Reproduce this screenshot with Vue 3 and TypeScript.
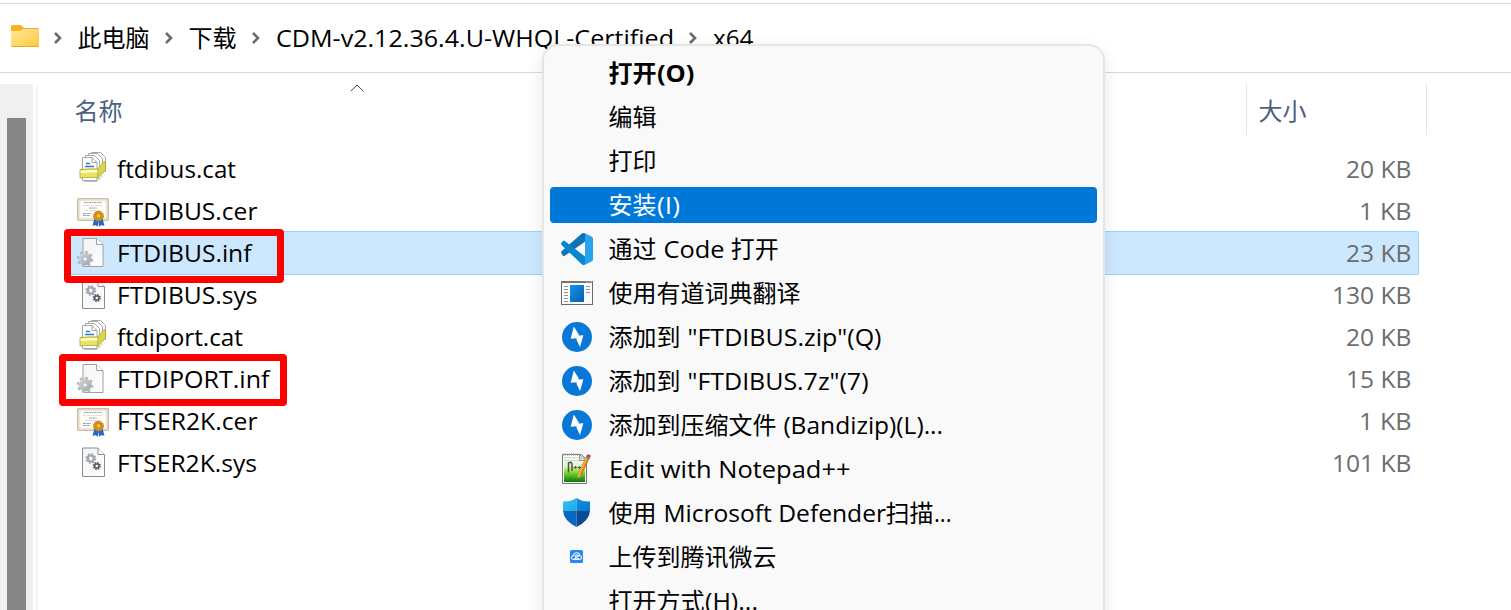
<script setup lang="ts">
import type { Directive } from 'vue'

type Run = { t: string; w?: number }
type FileRow = { name: Run; kind: 'cat' | 'cer' | 'inf' | 'sys'; size: Run; selected?: boolean }
type MenuItem = { runs: Run[]; icon?: string; bold?: boolean; active?: boolean }

// Condenses a Latin run so that it takes up exactly the given advance width.
const vFit: Directive<HTMLElement, number | undefined> = {
  mounted(el, { value }) {
    if (!value) return
    const inner = el.firstElementChild as HTMLElement
    const natural = inner.getBoundingClientRect().width
    el.style.width = `${value}px`
    inner.style.transform = `scaleX(${value / natural})`
  },
}

const crumbs: Run[] = [
  { t: '此电脑' },
  { t: '下载' },
  { t: 'CDM-v2.12.36.4.U-WHQL-Certified', w: 398 },
  { t: 'x64', w: 40.5 },
]

const files: FileRow[] = [
  { name: { t: 'ftdibus.cat', w: 119 }, kind: 'cat', size: { t: '20 KB', w: 65.5 } },
  { name: { t: 'FTDIBUS.cer', w: 140.5 }, kind: 'cer', size: { t: '1 KB', w: 52.5 } },
  { name: { t: 'FTDIBUS.inf', w: 134.5 }, kind: 'inf', size: { t: '23 KB', w: 65.5 }, selected: true },
  { name: { t: 'FTDIBUS.sys', w: 140.5 }, kind: 'sys', size: { t: '130 KB', w: 79.5 } },
  { name: { t: 'ftdiport.cat', w: 126 }, kind: 'cat', size: { t: '20 KB', w: 65.5 } },
  { name: { t: 'FTDIPORT.inf', w: 152.5 }, kind: 'inf', size: { t: '15 KB', w: 65.5 } },
  { name: { t: 'FTSER2K.cer', w: 140.5 }, kind: 'cer', size: { t: '1 KB', w: 52.5 } },
  { name: { t: 'FTSER2K.sys', w: 140 }, kind: 'sys', size: { t: '101 KB', w: 79.5 } },
]

const menu: MenuItem[] = [
  { runs: [{ t: '打开' }, { t: '(O)', w: 37.5 }], bold: true },
  { runs: [{ t: '编辑' }] },
  { runs: [{ t: '打印' }] },
  { runs: [{ t: '安装' }, { t: '(I)', w: 23 }], active: true },
  { runs: [{ t: '通过' }, { t: ' Code ', w: 74.2 }, { t: '打开' }], icon: 'code' },
  { runs: [{ t: '使用有道词典翻译' }], icon: 'dict' },
  { runs: [{ t: '添加到' }, { t: ' "FTDIBUS.zip"(Q)', w: 200.5 }], icon: 'zip' },
  { runs: [{ t: '添加到' }, { t: ' "FTDIBUS.7z"(7)', w: 187.5 }], icon: 'zip' },
  { runs: [{ t: '添加到压缩文件' }, { t: ' (Bandizip)(L)...', w: 166 }], icon: 'zip' },
  { runs: [{ t: 'Edit with Notepad++', w: 241.5 }], icon: 'npp' },
  { runs: [{ t: '使用' }, { t: ' Microsoft Defender', w: 229 }, { t: '扫描' }, { t: '...', w: 17.5 }], icon: 'shield' },
  { runs: [{ t: '上传到腾讯微云' }], icon: 'cloud' },
  { runs: [{ t: '打开方式' }, { t: '(H)...', w: 53 }] },
]
</script>

<template>
  <div class="window">
    <svg class="defs" width="0" height="0" aria-hidden="true">
      <defs>
        <linearGradient id="folder" x1="0" y1="0" x2="1" y2="1">
          <stop offset="0" stop-color="#ffe9a0" /><stop offset="1" stop-color="#fdc93c" />
        </linearGradient>
        <linearGradient id="page" x1="0" y1="0" x2="1" y2="1">
          <stop offset="0" stop-color="#f4f4f4" /><stop offset="1" stop-color="#fdfdfd" />
        </linearGradient>
        <linearGradient id="gear" x1="0" y1="0" x2="1" y2="1">
          <stop offset="0" stop-color="#ced4d9" /><stop offset="1" stop-color="#a4abb1" />
        </linearGradient>
        <linearGradient id="blue" x1="0" y1="0" x2="1" y2="1">
          <stop offset="0" stop-color="#1593e6" /><stop offset="1" stop-color="#0560b5" />
        </linearGradient>
        <linearGradient id="grass" x1="0" y1="0" x2="0" y2="1">
          <stop offset="0" stop-color="#f6faf4" /><stop offset=".35" stop-color="#e2f5cf" />
          <stop offset=".62" stop-color="#82d92b" /><stop offset="1" stop-color="#08780c" />
        </linearGradient>
        <linearGradient id="sh-a" x1="0" y1="0" x2="1" y2="1">
          <stop offset="0" stop-color="#34c5f3" /><stop offset="1" stop-color="#22a5e8" />
        </linearGradient>
        <linearGradient id="sh-b" x1="0" y1="0" x2="1" y2="1">
          <stop offset="0" stop-color="#1290df" /><stop offset="1" stop-color="#0878d4" />
        </linearGradient>
      </defs>
      <symbol id="i-cat" viewBox="0 0 32 32">
        <g fill="#fff" stroke="#a5a8a6" stroke-width="1">
          <path d="M14.5 1.5h9l5 5v14h-14z" /><path d="M11.5 2.500h9l5 5v14h-14z" />
          <path d="M8.500 4.500h9l5 5v14h-14z" /><path d="M5.500 6.500h9.500l5 5v18h-14.500z" />
          <path d="M15 6.500v5h5" fill="none" />
        </g>
        <path d="M9 12.500h4M8 15.500h9" stroke="#3273c4" stroke-width="1.400" />
        <path d="M20.500 18l8-8.500v9.500l-8 9z" fill="#dcd54a" stroke="#a9a331" stroke-width=".7" />
        <path d="M3 18.500q9-1 17.800-.5v8.500q-9-.5-17.800.5z" fill="#e9e45c" stroke="#aaa535" stroke-width=".8" />
        <path d="M3.500 21q9-1 17-.7" stroke="#fcfccc" stroke-width="2.500" fill="none" />
        <path d="M7 30.500h13l6-6" stroke="#bdbdbd" fill="none" />
      </symbol>
      <symbol id="i-cer" viewBox="0 0 32 32" overflow="visible">
        <rect x=".8" y="5.800" width="30.400" height="21.400" rx="1" fill="#fffdf8" stroke="#c9bda6" stroke-width="1.600" />
        <rect x="2.500" y="7.500" width="27" height="18" fill="none" stroke="#e6decd" stroke-width="1.600" stroke-dasharray="1.500 .7" />
        <path d="M7 9.500h18" stroke="#9daac4" stroke-dasharray="2 .5" />
        <path d="M6 12.500h20M8 17.500h12" stroke="#d9d9de" stroke-dasharray="3 1" />
        <path d="M12 15h8M6 20.500h8M6 22.500h7" stroke="#91a0c5" stroke-dasharray="3 .6" />
        <path d="M17.500 25l-2 8 3-1 2.300 1.800 1-7zM25.500 25l2 8-3-1-2.300 1.800-1-7z" fill="#2467c7" />
        <circle cx="21.500" cy="23" r="5" fill="#d9951b" stroke="#bd7711" stroke-width="1" stroke-dasharray="1.500 .8" />
        <circle cx="21.500" cy="22.800" r="2.600" fill="#efb943" stroke="#b8730d" stroke-width=".8" />
      </symbol>
      <symbol id="i-inf" viewBox="0 0 32 32">
        <path d="M6 3.500h13.500l6.500 6v22h-20z" fill="url(#page)" stroke="#a0a0a0" />
        <path d="M19.500 3.500v6h6.500" fill="#fff" stroke="#a0a0a0" />
        <circle cx="8" cy="24" r="7" fill="none" stroke="#b2b8bd" stroke-width="2.600" stroke-dasharray="2.700 2.800" />
        <circle cx="8" cy="24" r="4.500" fill="none" stroke="url(#gear)" stroke-width="4" />
        <circle cx="8" cy="24" r="2.300" fill="#f3f5f7" stroke="#8f979e" stroke-width=".7" />
      </symbol>
      <symbol id="i-sys" viewBox="0 0 32 32">
        <path d="M5.500 3h15.500l6.500 6.500v22h-22z" fill="url(#page)" stroke="#8d8d8d" />
        <path d="M21 3v6.500h6.500" fill="#fff" stroke="#8d8d8d" />
        <circle cx="13.800" cy="13.500" r="4.500" fill="none" stroke="#9ba5ae" stroke-width="1.800" stroke-dasharray="1.770 1.765" />
        <circle cx="13.800" cy="13.500" r="3" fill="none" stroke="#9ba5ae" stroke-width="2.200" />
        <circle cx="19.800" cy="21" r="3.400" fill="none" stroke="#545b61" stroke-width="1.600" stroke-dasharray="1.335 1.335" />
        <circle cx="19.800" cy="21" r="2.200" fill="none" stroke="#545b61" stroke-width="1.700" />
      </symbol>
      <symbol id="i-code" viewBox="0 0 32 32">
        <path d="M.5 20.200Q-.4 19.200.5 18.200L20.500.7Q22 -.4 24 0v8.700L3.300 23.100Q2.400 23.500 1.700 22.600z" fill="#0f72b9" />
        <path d="M.5 9.800Q-.4 10.800.5 12L20.500 31Q22 32.300 24 32V23.500L3.500 7.800Q2.600 7.200 1.700 8.200z" fill="#0785cf" />
        <path d="M20.500 31.300c1.500 1.100 2.600.8 3.500.4l6.500-3.100q1.500-.7 1.500-2.300V5.700q0-1.600-1.500-2.300L24 .3C22.800-.2 21.500 0 20.500.9c1.600-1.300 3.500-.5 3.500 1.400v27.600c0 1.900-2 2.800-3.500 1.400z" fill="#27a4ed" />
      </symbol>
      <symbol id="i-dict" viewBox="0 0 32 32">
        <rect x=".5" y="4.500" width="31" height="23" fill="#fafafa" stroke="#696969" />
        <path d="M0 5h32" stroke="#747474" stroke-width="2" />
        <path d="M25 5h1M27.500 5h1M30 5h1" stroke="#eee" />
        <path d="M3 9.500h4M3 12.500h4M3 15.500h4M3 18.500h4M3 21.500h4M3 24.500h4M25 9.500h4M25 12.500h4M25 15.500h4" stroke="#939393" />
        <rect x="9" y="8" width="14" height="17" fill="url(#blue)" />
      </symbol>
      <symbol id="i-zip" viewBox="0 0 32 32">
        <circle cx="16" cy="16" r="15" fill="#0878d8" />
        <path d="M12.800 5.500l4.900 7.800-.3 1.300 5-.3-3.400 11.800-3.600-7.600.5-1.300-6.200.6z" fill="#fff" />
      </symbol>
      <symbol id="i-npp" viewBox="0 0 32 32">
        <path d="M1.500 1.500h19l5 5v24h-24z" fill="#fff" stroke="#777" />
        <path d="M3 4h17l4 4v21H3z" fill="url(#grass)" />
        <path d="M3 4.500h16M3 7.500h19" stroke="#cbd9dc" />
        <path d="M2 1.500h18" stroke="#999" stroke-dasharray="1 1" stroke-width="2" />
        <path d="M18.500 1.500l6.500 6h-6.500z" fill="#d6d6d6" stroke="#999" />
        <path d="M7.500 19.500V10q3.500-2 3.500 2v6" fill="none" stroke="#4a5248" stroke-width="1.500" />
        <path d="M12.500 14.500h4M17 14.500h3M14.500 13v3M18.500 13v3" stroke="#526548" stroke-width="1.200" />
        <path d="M27.500 3L18.500 22" stroke="#c7791b" stroke-width="4" />
        <path d="M26.800 3L18 22" stroke="#efae38" stroke-width="2" />
        <path d="M16.700 21l3.600 1.500-3.800 2.800z" fill="#d3ae73" />
        <path d="M26.500 1l3.500 1.500-1.500 3-3-1.500z" fill="#c64456" />
        <path d="M25 4l3.500 1.700" stroke="#668fa8" stroke-width="1.500" />
      </symbol>
      <symbol id="i-shield" viewBox="0 0 32 32">
        <path d="M15.500 1Q9.500 5 2 4.500V14h13.500z" fill="url(#sh-a)" />
        <path d="M15.500 1Q21.500 5 29 4.500V14H15.500z" fill="url(#sh-b)" />
        <path d="M2 14h13.500v16Q3 24 2 14z" fill="#0867c4" />
        <path d="M29 14H15.500v16Q28 24 29 14z" fill="#084b92" />
      </symbol>
      <symbol id="i-cloud" viewBox="0 0 32 32">
        <rect x="9" y="9" width="13" height="13" rx="1.500" fill="#2b87ee" />
        <path d="M13 18.500q-2.800-.2-2.300-2.300.3-1.500 2-1.600.5-2.800 3-2.800t3 2.800q1.800.2 1.900 2 0 1.900-2.400 1.900zM13 18.500l4.500-3.500q-2-1.700-3 0-.4 2.500 3.500 2.500" fill="none" stroke="#e9f4ff" stroke-width="1.100" />
      </symbol>
    </svg>

    <header class="address">
      <svg class="folder" width="28" height="23" viewBox="0 0 28 23">
        <path d="M0 1.500Q0 0 1.500 0H9q1 0 1.700.8L13 3v4H0z" fill="#f7b21c" />
        <path d="M0 6h9.500L12 3.500h15q1 0 1 1V21q0 1-1 1H1q-1 0-1-1z" fill="url(#folder)" />
        <path d="M12 3.500h15.500M.5 21.500h27" stroke="#e9ad2b" fill="none" />
      </svg>
      <template v-for="(c, i) in crumbs" :key="i">
        <svg class="sep" width="8" height="12" viewBox="0 0 8 12"><path d="M1 1l5 5-5 5" /></svg>
        <span v-fit="c.w" class="run crumb"><span class="glyphs">{{ c.t }}</span></span>
      </template>
    </header>

    <div class="body">
      <aside class="scroll"><div class="thumb"></div></aside>
      <main class="list">
        <div class="head">
          <div class="col name">
            名称
            <svg class="sort" width="14" height="8" viewBox="0 0 14 8"><path d="M.7 7.200L7 1l6.300 6.200" /></svg>
          </div>
          <div class="col size">大小</div>
        </div>
        <div v-for="f in files" :key="f.name.t" class="row" :class="{ selected: f.selected }">
          <svg class="icon" width="32" height="32"><use :href="'#i-' + f.kind" /></svg>
          <span v-fit="f.name.w" class="run"><span class="glyphs">{{ f.name.t }}</span></span>
          <span class="spacer"></span>
          <span v-fit="f.size.w" class="run kb"><span class="glyphs">{{ f.size.t }}</span></span>
        </div>
      </main>
    </div>

    <div class="mark mark-first"></div>
    <div class="mark mark-second"></div>

    <div class="menu">
      <div v-for="(m, i) in menu" :key="i" class="item" :class="{ bold: m.bold, active: m.active }">
        <svg class="icon" width="32" height="32"><use v-if="m.icon" :href="'#i-' + m.icon" /></svg>
        <span class="label"><span v-for="(r, j) in m.runs" :key="j" v-fit="r.w" class="run"><span class="glyphs">{{ r.t }}</span></span></span>
      </div>
    </div>
  </div>
</template>

<style>
html,
body {
  margin: 0;
  overflow: hidden;
  background: #fff;
}
</style>

<style scoped>
.window {
  position: relative;
  box-sizing: border-box;
  width: 1511px;
  height: 610px;
  padding-top: 3px;
  overflow: hidden;
  background: #fff;
  color: #000;
  font: 24px/34px 'Open Sans', 'Noto Sans CJK SC', sans-serif;
  font-weight: 400;
}
.defs {
  position: absolute;
}
.run {
  display: inline-block;
  flex: none;
  height: 34px;
  white-space: pre;
  vertical-align: top;
}
.glyphs {
  display: inline-block;
  height: 34px;
  transform-origin: 0 50%;
  vertical-align: top;
}
.address {
  display: flex;
  align-items: center;
  box-sizing: border-box;
  height: 70px;
  padding-left: 11px;
  border-top: 1px solid #d9d9d9;
  border-bottom: 1px solid #d9d9d9;
}
.folder {
  margin-top: -3px;
  margin-right: 15px;
}
.sep {
  margin-right: 15.5px;
}
.sep path {
  fill: none;
  stroke: #6b6b6b;
  stroke-width: 2.6;
}
.crumb + .sep {
  margin-left: 15.5px;
}
.body {
  display: flex;
  height: 526px;
  margin-top: 11px;
}
.scroll {
  box-sizing: border-box;
  width: 33px;
  padding: 34px 7px 0;
  background: #f0f0f0;
}
.thumb {
  height: 100%;
  background: #858585;
}
.list {
  flex: 1;
  margin-left: 3px;
  border-left: 2px solid #f5f5f5;
}
.head {
  display: flex;
  height: 51px;
  margin-bottom: 13px;
  color: #4c607f;
}
.col {
  box-sizing: border-box;
  height: 51px;
  border-right: 1px solid #e5e5e5;
  line-height: 53px;
}
.col.name {
  display: flex;
  width: 1209px;
  padding-left: 36.5px;
}
.sort {
  margin: 0 0 0 227.5px;
}
.sort path {
  fill: none;
  stroke: #444;
}
.col.size {
  width: 180px;
  padding-left: 11.5px;
}
.row {
  display: flex;
  align-items: center;
  box-sizing: border-box;
  width: 1353px;
  height: 42px;
  margin-left: 28px;
  padding: 0 8px 0 11px;
}
.row .icon {
  margin-top: -5px;
  margin-right: 8px;
}
.icon {
  flex: none;
  overflow: visible;
}
.spacer {
  flex: 1;
}
.kb {
  color: #6d6d6d;
}
.row.selected {
  height: 44px;
  margin-top: -1px;
  margin-bottom: -1px;
  padding: 0 7px 0 10px;
  border: 1px solid #99d1ff;
  border-radius: 2px;
  background: #cce8ff;
}
.mark {
  position: absolute;
  box-sizing: border-box;
  border: 7px solid #fe0000;
  border-radius: 4px;
}
.mark-first {
  top: 229px;
  left: 64px;
  width: 220px;
  height: 54px;
}
.mark-second {
  top: 354px;
  left: 59px;
  width: 228px;
  height: 52px;
}
.menu {
  position: absolute;
  top: 44px;
  left: 542px;
  box-sizing: border-box;
  width: 563px;
  height: 620px;
  padding: 9px 6px;
  border: 2px solid #e5e5e5;
  border-radius: 16px;
  background: #f9f9f9;
  box-shadow: 0 6px 18px rgba(0, 0, 0, 0.09);
}
.item {
  display: flex;
  align-items: center;
  height: 36px;
  margin-bottom: 8px;
  padding-left: 11px;
  border-radius: 4px;
}
.item .icon {
  margin-right: 15.5px;
}
.item.bold {
  font-weight: 700;
}
.item.active {
  background: #0078d7;
  color: #fff;
}
.label {
  display: flex;
}
</style>
